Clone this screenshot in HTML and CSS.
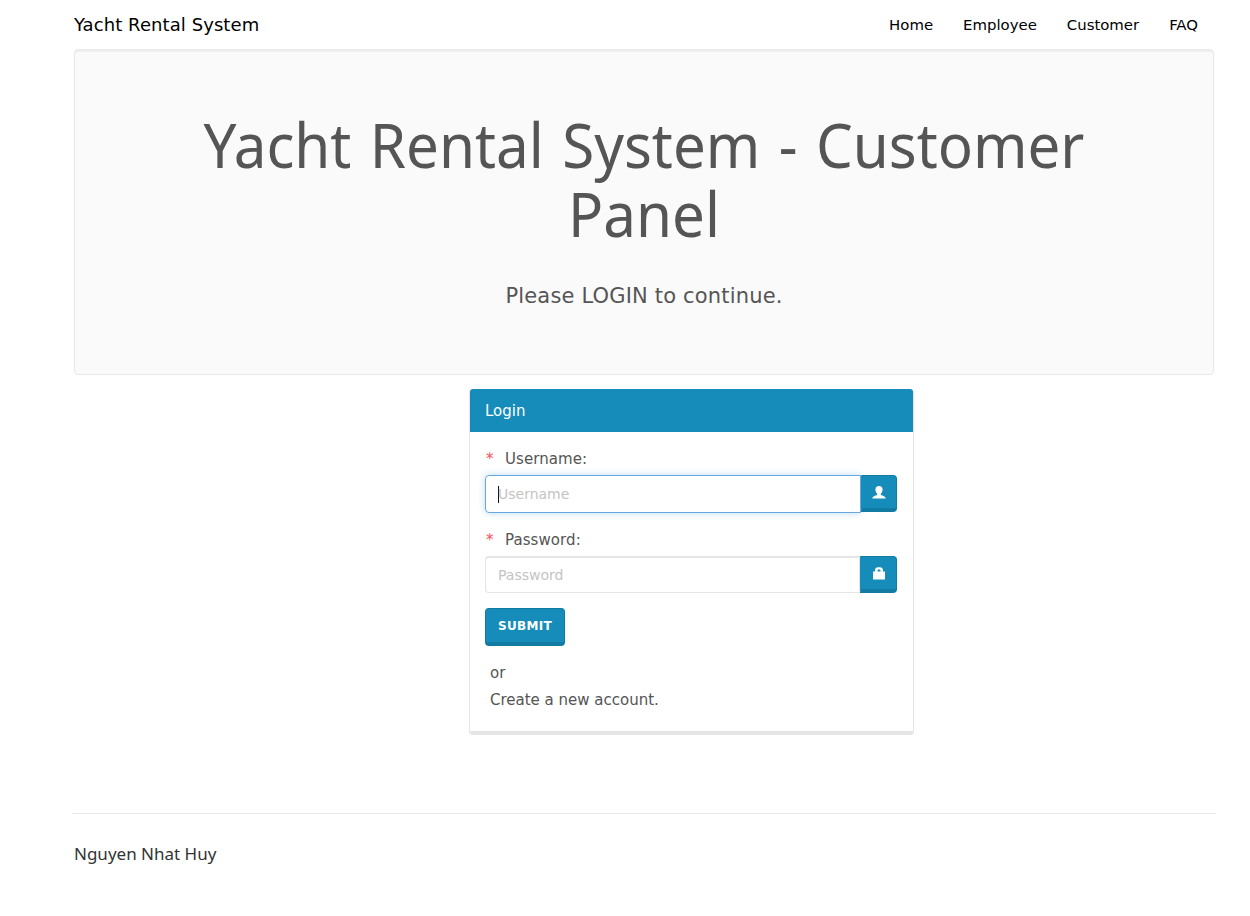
FILE: index.html
```html
<!DOCTYPE html>
<html lang="en">
<head>
<meta charset="utf-8">
<title>Yacht Rental System</title>
<link rel="stylesheet" href="styles.css">
</head>
<body>
<div class="container">
  <nav class="navbar">
    <a class="brand">Yacht Rental System</a>
    <div class="links"><a>Home</a><a>Employee</a><a>Customer</a><a>FAQ</a></div>
  </nav>
  <header class="jumbotron">
    <h1>Yacht Rental System - Customer<br>Panel</h1>
    <p>Please LOGIN to continue.</p>
  </header>
  <main class="panel">
    <div class="panel-heading">Login</div>
    <form class="panel-body">
      <label><span class="star">*</span><span>Username:</span></label>
      <div class="group focused">
        <div class="input"><span class="caret"></span><span>Username</span></div>
        <div class="addon"><svg width="14" height="13" viewBox="0 0 14 13"><path fill="#fff" d="M7 0C4.700 0 3.400 1.400 3.400 3.500c0 1.900.7 3.400 1.800 4.300v1c0 .8-4.600 1.100-4.800 3.100V12.500h13.200V11.900c-.2-2-4.800-2.300-4.800-3.100v-1c1.100-.9 1.800-2.400 1.800-4.300C10.600 1.400 9.300 0 7 0z"/></svg></div>
      </div>
      <label class="second"><span class="star">*</span><span>Password:</span></label>
      <div class="group">
        <div class="input"><span>Password</span></div>
        <div class="addon"><svg width="14" height="13" viewBox="0 0 14 13"><path fill="#fff" fill-rule="evenodd" d="M1 4.500h2V3.200C3 1.300 4.300.3 6 .3h2c1.700 0 3 1 3 2.900V4.500h2v8H1zM5.500 4.500h3V3.400C8.500 2.800 8.200 2.500 7.700 2.500H6.300C5.800 2.500 5.500 2.800 5.500 3.400z"/></svg></div>
      </div>
      <button type="button" class="submit">SUBMIT</button>
      <div class="or">or</div>
      <div class="create"><a>Create a new account.</a></div>
    </form>
  </main>
</div>
<hr>
<footer class="container">Nguyen Nhat Huy</footer>
</body>
</html>
```
FILE: styles.css
```css
* { box-sizing: border-box; }
body { margin: 0; background: #fff; color: #555; font: 15px/27px "DejaVu Sans", sans-serif; }
.container { width: 1140px; margin-left: 74px; }
.navbar { height: 49px; display: flex; justify-content: space-between; align-items: center; color: #000; }
.brand { font-size: 18px; letter-spacing: .08px; }
.links { display: flex; gap: 30px; padding: 2px 16px 0 0; font-size: 14.900px; }
.jumbotron { height: 326px; padding: 60px 60px 0; text-align: center; background: #fafafa; border: 1px solid #e8e8e8; border-radius: 4px; box-shadow: inset 0 2px 0 rgba(0,0,0,.045); }
h1 { margin: 0; font: 400 62px/69px "Noto Sans", sans-serif; word-spacing: 3.500px; white-space: nowrap; transform: scaleX(.94); }
.jumbotron p { margin: 33px 0 0; font-size: 21px; line-height: 30px; letter-spacing: .170px; }
.panel { width: 445px; height: 346px; margin: 14px 0 0 395px; border: 1px solid #e5e5e5; border-top: 0; border-bottom: 4px solid #e5e5e5; border-radius: 4px; }
.panel-heading { height: 43px; padding: 1px 0 0 15px; line-height: 43px; color: #fff; background: #158cba; border-radius: 3px 3px 0 0; }
.panel-body { display: flex; flex-direction: column; padding: 13px 15px 0; }
label { display: flex; height: 30px; padding-top: 1px; line-height: 27px; letter-spacing: .08px; }
.star { width: 20px; padding-left: 1px; color: #ff4d55; }
label.second { margin-top: 13px; }
.group { display: flex; height: 38px; }
.input { display: flex; align-items: center; width: 376px; padding-left: 12px; border: 1px solid #e5e5e5; border-top-width: 2px; border-radius: 4px 0 0 4px; color: #c4c4c4; font-size: 14px; }
.group:not(.focused) .input { height: 37px; width: 375px; }
.focused .input { border: 1px solid #66a9e0; box-shadow: 0 0 7px rgba(102,175,233,.45); }
.caret { width: 1px; height: 17px; margin-right: -1px; background: #111; }
.addon { display: flex; align-items: center; justify-content: center; width: 37px; height: 37px; background: #158cba; border: 1px solid #127ba3; border-bottom-width: 4px; border-left-color: #158cba; border-radius: 0 4px 4px 0; }
.focused .addon { width: 36px; }
.submit { width: 80px; height: 38px; margin: 14px 0 0; padding: 0; color: #fff; background: #158cba; border: 1px solid #127ba3; border-bottom-width: 4px; border-radius: 4px; font: bold 12px/18px "DejaVu Sans", sans-serif; letter-spacing: .300px; }
.or { margin: 14px 0 0 5px; }
.create { margin-left: 5px; }
hr { width: 1144px; height: 1px; margin: 78px 0 0 72px; border: 0; background: #eaeaea; }
footer { padding-top: 26px; color: #333; font-family: "Noto Sans", sans-serif; font-size: 17px; }
```
